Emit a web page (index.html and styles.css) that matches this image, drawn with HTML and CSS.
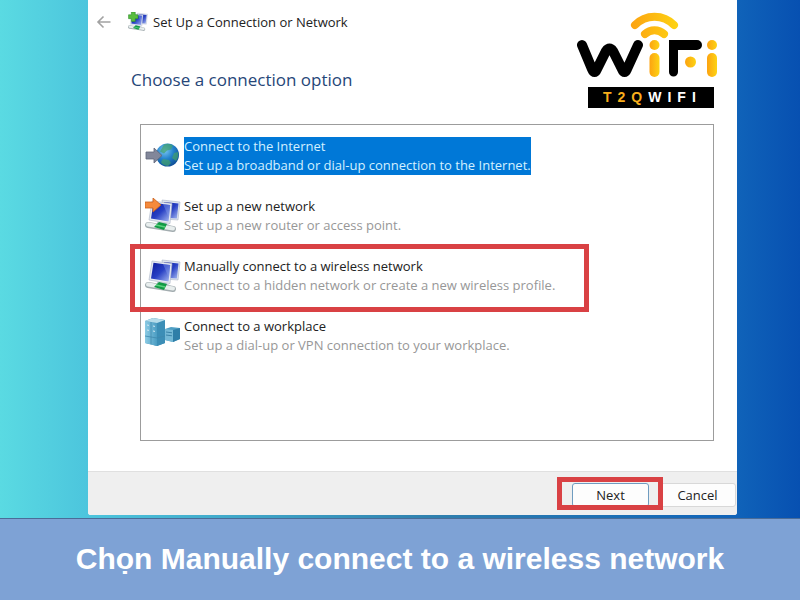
FILE: index.html
```html
<!DOCTYPE html>
<html lang="vi">
<head>
<meta charset="utf-8">
<meta name="viewport" content="width=device-width, initial-scale=1">
<title>Set Up a Connection or Network</title>
<link rel="stylesheet" href="styles.css">
</head>
<body>
<svg class="defs" aria-hidden="true">
  <defs>
    <linearGradient id="screen" x1="0" y1="0" x2="1" y2="1">
      <stop offset="0" stop-color="#0a1a9c"/><stop offset=".5" stop-color="#2840c4"/><stop offset="1" stop-color="#a9bcf2"/>
    </linearGradient>
    <radialGradient id="globe" cx=".38" cy=".3" r=".75">
      <stop offset="0" stop-color="#7cc8f4"/><stop offset=".5" stop-color="#2483cc"/><stop offset="1" stop-color="#0d4c94"/>
    </radialGradient>
    <linearGradient id="gold" x1="0" y1="0" x2="1" y2="0">
      <stop offset="0" stop-color="#fca311"/><stop offset="1" stop-color="#fdd313"/>
    </linearGradient>
    <linearGradient id="goldWide" gradientUnits="userSpaceOnUse" x1="55" y1="0" x2="102" y2="0">
      <stop offset="0" stop-color="#fca311"/><stop offset="1" stop-color="#fdd313"/>
    </linearGradient>
    <linearGradient id="tower" x1="0" y1="0" x2="1" y2="0">
      <stop offset="0" stop-color="#8ccbe4"/><stop offset="1" stop-color="#4a9cc2"/>
    </linearGradient>
    <g id="computers">
      <path d="M17 2l18 2-2 18-14-1z" fill="#dde3ee" stroke="#aab4c8" stroke-width=".6"/>
      <path d="M19 4l14.500 1.500-1.600 15-12-.8z" fill="url(#screen)"/>
      <path d="M7 3l20 2.500-2 20L4 22z" fill="#e6eaf2" stroke="#a9b3c6" stroke-width=".6"/>
      <path d="M8.500 4.700l16.700 2.200-1.600 16.600L6 20.600z" fill="url(#screen)"/>
      <path d="M18 6l7.200 .9-1.300 13z" fill="#8da4ee" opacity=".4"/>
      <path d="M12 24l9 1 5 3-13-1z" fill="#b7c0cc"/>
      <path d="M3 27l25 4" stroke="#a3adb0" stroke-width="6" stroke-linecap="round"/>
      <path d="M3 26.500l25 4" stroke="#e8eeee" stroke-width="4" stroke-linecap="round"/>
      <path d="M9 29l5-5 8 2-3 6z" fill="#129a45"/>
      <path d="M11 27l9 2" stroke="#5bd07e" stroke-width="1.500"/>
    </g>
  </defs>
</svg>

<main class="scene">
  <section class="dialog" aria-labelledby="dialog-title">
    <header class="titlebar">
      <button class="back" type="button" aria-label="Back">
        <svg width="16" height="14" viewBox="0 0 16 14"><path d="M14.500 7H2M7.500 1.500L2 7l5.500 5.500" fill="none" stroke="#a2a2a2" stroke-width="1.600"/></svg>
      </button>
      <svg class="title-icon" width="20" height="20" viewBox="0 0 36 36" aria-hidden="true">
        <use href="#computers"/>
        <path d="M6 0h7v5h5v7h-5v5H6v-5H1V5h5z" fill="#58bd3d" stroke="#2c8a2c"/>
      </svg>
      <span id="dialog-title">Set Up a Connection or Network</span>
    </header>

    <svg class="brand" viewBox="0 0 142 98" role="img" aria-label="WiFi T2QWIFI">
      <path d="M6 35L16 59Q18.500 65 21 59L30 41Q33.500 36 37 41L46 59Q48.500 65 51 59L62 35" fill="none" stroke="#000" stroke-width="10" stroke-linecap="round" stroke-linejoin="round"/>
      <path d="M59 15A27 27 0 0 1 98 15M69 24A14 14 0 0 1 88 24" fill="none" stroke="url(#goldWide)" stroke-width="8" stroke-linecap="round"/>
      <circle cx="78.500" cy="35" r="5" fill="url(#gold)"/>
      <rect x="73.500" y="43" width="10" height="24" rx="5" fill="url(#gold)"/>
      <path d="M93 30H121a5 5 0 0 1 0 10H102V62a4.500 4.500 0 0 1-9 0z" fill="#000"/>
      <circle cx="114.500" cy="52" r="5.500" fill="url(#gold)"/>
      <circle cx="136" cy="35" r="5" fill="url(#gold)"/>
      <rect x="131" y="43" width="10" height="24" rx="5" fill="url(#gold)"/>
      <rect x="12" y="77" width="126" height="21" fill="#000"/>
      <text class="brand-name" x="27" y="92"><tspan fill="#f9ae1c">T2Q</tspan><tspan fill="#fff">WIFI</tspan></text>
    </svg>

    <div class="content">
      <h1>Choose a connection option</h1>
      <ul class="options">
        <li>
          <button class="option selected" type="button">
            <svg class="icon" width="36" height="36" viewBox="0 0 36 36" aria-hidden="true">
              <circle cx="22.500" cy="17" r="11.500" fill="url(#globe)"/>
              <path d="M19 6.500q5-2 9 1l-2 4-4 1-3 3-4-2zM29 15l4-1q1 5-2 9l-4-3zM18 21l6 1 2 3-3 3q-6-1-7-4z" fill="#43a26b" opacity=".7"/>
              <path d="M1 14h8v-4l8 7.500L9 25v-4H1z" fill="#82879a" stroke="#5e6478" stroke-width=".8"/>
            </svg>
            <span class="text"><span class="name">Connect to the Internet</span><span class="note">Set up a broadband or dial-up connection to the Internet.</span></span>
          </button>
        </li>
        <li>
          <button class="option" type="button">
            <svg class="icon" width="36" height="36" viewBox="0 0 36 36" aria-hidden="true">
              <use href="#computers"/>
              <path d="M0 4h8V0l8 7-8 7v-4H0z" fill="#f58a3c" stroke="#c9601c" stroke-width=".8"/>
            </svg>
            <span class="text"><span class="name">Set up a new network</span><span class="note">Set up a new router or access point.</span></span>
          </button>
        </li>
        <li class="marked">
          <button class="option" type="button">
            <svg class="icon" width="36" height="36" viewBox="0 0 36 36" aria-hidden="true"><use href="#computers"/></svg>
            <span class="text"><span class="name">Manually connect to a wireless network</span><span class="note">Connect to a hidden network or create a new wireless profile.</span></span>
          </button>
        </li>
        <li>
          <button class="option" type="button">
            <svg class="icon" width="36" height="36" viewBox="0 0 36 36" aria-hidden="true">
              <path d="M20 11l6-2 9 1v11l-7 3-8-2z" fill="#4f9fc4"/>
              <path d="M20 11l8 1v12l-8-2z" fill="#74b8d6"/>
              <path d="M28 12l7-2v11l-7 3z" fill="#2f7ea8"/>
              <path d="M21 14l6 .8M21 17l6 .8" stroke="#3b83a8"/>
              <path d="M0 3l8-3 12 2v23l-8 3-12-3z" fill="#3d8fb8"/>
              <path d="M0 3l12 2v23L0 25z" fill="url(#tower)"/>
              <path d="M12 5l8-3v23l-8 3z" fill="#3c8eb6"/>
              <path d="M0 3l8-3 12 2-8 3z" fill="#b5dcea"/>
              <path d="M6 4v22M0 18l12 2 8-2" fill="none" stroke="#3f88ad" stroke-width=".8"/>
              <path d="M2 7l2 .4M8 8l2 .4M2 12l2 .4M8 13l2 .4" stroke="#d3eaf4"/>
            </svg>
            <span class="text"><span class="name">Connect to a workplace</span><span class="note">Set up a dial-up or VPN connection to your workplace.</span></span>
          </button>
        </li>
      </ul>
    </div>

    <footer class="actions">
      <span class="marked-action"><button class="action primary" type="button">Next</button></span>
      <button class="action" type="button">Cancel</button>
    </footer>
  </section>
</main>
<p class="caption">Chọn Manually connect to a wireless network</p>
</body>
</html>
```
FILE: styles.css
```css
* {
  box-sizing: border-box;
}

body {
  display: flex;
  flex-direction: column;
  min-height: 100vh;
  margin: 0;
  font-family: "Open Sans", "Noto Sans", sans-serif;
  font-size: 13px;
  line-height: 19px;
  color: #222;
}

button {
  margin: 0;
  font: inherit;
  color: inherit;
}

.defs {
  position: absolute;
  width: 0;
  height: 0;
}

.scene {
  display: flex;
  flex: 1;
  padding: 0 63px 3px 88px;
  background: linear-gradient(90deg, #5adae2 0%, #4cc5dd 11%, #2f7fae 55%, #1063b9 92%, #0750b1 100%);
}

.dialog {
  position: relative;
  display: flex;
  flex: 1;
  flex-direction: column;
  background: #fff;
  border-radius: 0 0 3px 3px;
}

.titlebar {
  display: flex;
  align-items: center;
  height: 44px;
  padding-left: 8px;
}

.back {
  display: flex;
  padding: 0;
  border: 0;
  background: none;
}

.title-icon {
  margin: 0 5px 0 16px;
}

.brand {
  position: absolute;
  top: 10px;
  right: 19px;
  width: 142px;
  height: 98px;
}

.brand-name {
  font: bold 14px "Liberation Sans", sans-serif;
  letter-spacing: 6px;
}

.content {
  display: flex;
  flex: 1;
  flex-direction: column;
  padding: 24px 23px 30px 52px;
}

h1 {
  margin: 0 0 32px -9px;
  font-size: 17px;
  font-weight: 400;
  line-height: 24px;
  color: #264678;
}

.options {
  display: flex;
  flex: 1;
  flex-direction: column;
  gap: 22px;
  margin: 0;
  padding: 12px 4px;
  border: 1px solid #9c9c9c;
  list-style: none;
}

.option {
  display: flex;
  align-items: center;
  gap: 3px;
  padding: 0;
  border: 0;
  background: none;
  text-align: left;
  white-space: nowrap;
}

.icon {
  flex: none;
}

.name,
.note {
  display: block;
}

.note {
  color: #979797;
}

.selected .text {
  background: #0078d7;
}

.selected .name,
.selected .note {
  color: #d3f0ff;
}

.marked,
.marked-action {
  position: relative;
}

.marked::after,
.marked-action::after {
  position: absolute;
  border: 5px solid #d94144;
  content: "";
  pointer-events: none;
}

.marked::after {
  inset: -13px 120px -17px -15px;
}

.marked-action::after {
  inset: -6px -14px -3px -15px;
}

.actions {
  display: flex;
  justify-content: flex-end;
  gap: 10px;
  height: 44px;
  padding: 11px 1px 8px;
  border-top: 1px solid #e0e0e0;
  border-radius: 0 0 3px 3px;
  background: #efefef;
}

.marked-action {
  display: flex;
}

.action {
  width: 77px;
  padding: 0;
  border: 1px solid #d8d8d8;
  border-radius: 3px;
  background: #fdfdfd;
}

.primary {
  border-color: #6f9cc0;
}

.caption {
  margin: 0;
  padding: 20px 16px 21px;
  border-top: 1px solid #4a6c98;
  background: #7ea2d5;
  color: #fff;
  font: bold 30px/40px "Liberation Sans", sans-serif;
  text-align: center;
}
```
